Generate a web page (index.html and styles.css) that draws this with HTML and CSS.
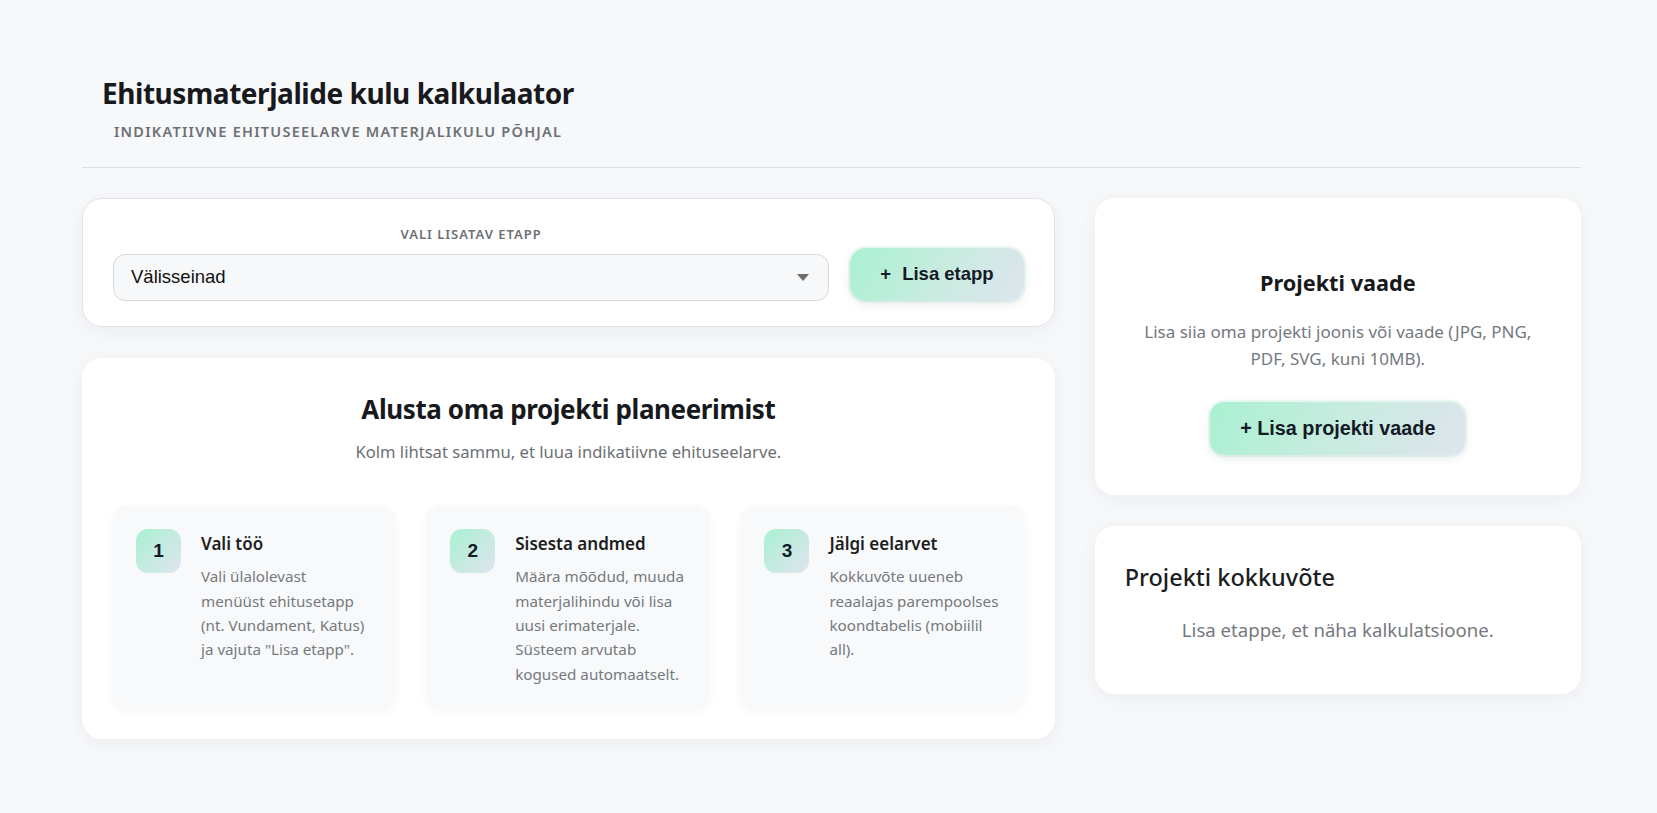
FILE: index.html
```html
<!DOCTYPE html>
<html lang="et">
<head>
<meta charset="utf-8">
<title>Ehitusmaterjalide kulu kalkulaator</title>
<link rel="stylesheet" href="styles.css">
</head>
<body>
<div class="app">
  <header class="header">
    <h1 class="title">Ehitusmaterjalide kulu kalkulaator</h1>
    <p class="subtitle">Indikatiivne ehituseelarve materjalikulu põhjal</p>
  </header>

  <main class="layout">
    <section class="left-col">
      <div class="card picker">
        <div class="field">
          <span class="field-label">Vali lisatav etapp</span>
          <div class="select">
            <span>Välisseinad</span>
            <span class="select-arrow"></span>
          </div>
        </div>
        <button class="btn btn-add"><span class="plus">+</span>Lisa etapp</button>
      </div>

      <div class="card intro">
        <h2 class="intro-title">Alusta oma projekti planeerimist</h2>
        <p class="intro-sub">Kolm lihtsat sammu, et luua indikatiivne ehituseelarve.</p>
        <div class="steps">
          <div class="step">
            <div class="badge">1</div>
            <div class="step-body">
              <h3 class="step-title">Vali töö</h3>
              <p class="step-text">Vali ülalolevast menüüst ehitusetapp (nt. Vundament, Katus) ja vajuta "Lisa etapp".</p>
            </div>
          </div>
          <div class="step">
            <div class="badge">2</div>
            <div class="step-body">
              <h3 class="step-title">Sisesta andmed</h3>
              <p class="step-text">Määra mõõdud, muuda materjalihindu või lisa uusi erimaterjale. Süsteem arvutab kogused automaatselt.</p>
            </div>
          </div>
          <div class="step">
            <div class="badge">3</div>
            <div class="step-body">
              <h3 class="step-title">Jälgi eelarvet</h3>
              <p class="step-text">Kokkuvõte uueneb reaalajas parempoolses koondtabelis (mobiilil all).</p>
            </div>
          </div>
        </div>
      </div>
    </section>

    <aside class="right-col">
      <div class="card upload">
        <h3 class="upload-title">Projekti vaade</h3>
        <p class="upload-text">Lisa siia oma projekti joonis või vaade (JPG, PNG, PDF, SVG, kuni 10MB).</p>
        <button class="btn btn-upload">+ Lisa projekti vaade</button>
      </div>

      <div class="card summary">
        <h3 class="summary-title">Projekti kokkuvõte</h3>
        <p class="summary-empty">Lisa etappe, et näha kalkulatsioone.</p>
      </div>
    </aside>
  </main>
</div>
</body>
</html>
```

FILE: styles.css
```css
* {
  box-sizing: border-box;
}

body {
  margin: 0;
  background: #f7f8fa;
  font-family: "Noto Sans", "Open Sans", sans-serif;
  color: #1c1e21;
}

.app {
  padding: 75px 76px 40px 82px;
}

/* Header */
.header {
  padding: 0 20px 25px;
  border-bottom: 1px solid #dcdfe3;
  margin-bottom: 30px;
}

.title {
  margin: 0;
  font-size: 28px;
  font-weight: 700;
  letter-spacing: -0.45px;
  line-height: 1.3;
  color: #17191c;
}

.subtitle {
  margin: 10px 0 0 12px;
  font-size: 14.5px;
  font-weight: 600;
  letter-spacing: 1.25px;
  text-transform: uppercase;
  color: #6c7075;
  line-height: 1.4;
}

/* Layout */
.layout {
  display: grid;
  grid-template-columns: 2fr 1fr;
  gap: 40px;
  align-items: start;
}

.left-col,
.right-col {
  display: flex;
  flex-direction: column;
  gap: 31px;
}

.card {
  background: #ffffff;
  border-radius: 20px;
  box-shadow: 0 4px 20px rgba(20, 30, 50, 0.05);
}

/* Stage picker */
.picker {
  border: 1px solid #e2e4e8;
  padding: 25px 30px;
  display: flex;
  align-items: flex-end;
  gap: 21px;
}

.field {
  flex: 1;
  display: flex;
  flex-direction: column;
  align-items: center;
}

.field-label {
  font-size: 13px;
  font-weight: 600;
  letter-spacing: 1px;
  text-transform: uppercase;
  color: #6c7075;
  line-height: 20px;
  margin-bottom: 10px;
}

.select {
  width: 100%;
  height: 47px;
  border: 1px solid #d6d9dd;
  border-radius: 12px;
  background: #f7f8fa;
  display: flex;
  align-items: center;
  justify-content: space-between;
  padding: 0 19px 0 17px;
  font-family: "Liberation Sans", Arial, sans-serif;
  font-size: 18.5px;
  color: #111111;
}

.select-arrow {
  width: 0;
  height: 0;
  border-left: 6px solid transparent;
  border-right: 6px solid transparent;
  border-top: 7px solid #6b6b6b;
}

.btn {
  border: none;
  height: 53px;
  padding: 0 30px;
  border-radius: 16px;
  background: linear-gradient(120deg, #a9f1d2 0%, #c7ecdf 50%, #dfe4ee 100%);
  font-family: "Liberation Sans", Arial, sans-serif;
  font-weight: 700;
  color: #141a26;
  box-shadow: 0 3px 10px rgba(40, 60, 80, 0.1), 0 0 0 2px rgba(220, 245, 235, 0.5);
  cursor: pointer;
  white-space: nowrap;
}

.btn-add {
  font-size: 18.5px;
}

.plus {
  margin-right: 11px;
}

/* Intro */
.intro {
  padding: 35px 30px 29px;
  text-align: center;
}

.intro-title {
  margin: 0;
  font-size: 26px;
  font-weight: 700;
  letter-spacing: -0.4px;
  line-height: 1.3;
  color: #17191c;
}

.intro-sub {
  margin: 14px 0 40px;
  font-size: 16.6px;
  line-height: 1.5;
  color: #6c7075;
}

.steps {
  display: grid;
  grid-template-columns: repeat(3, 1fr);
  gap: 30px;
  text-align: left;
}

.step {
  background: #f8f9fa;
  border-radius: 16px;
  padding: 24px;
  display: flex;
  gap: 20px;
  box-shadow: 0 3px 10px rgba(20, 30, 50, 0.035);
}

.badge {
  flex: 0 0 45px;
  height: 44px;
  border-radius: 12px;
  background: linear-gradient(135deg, #a9f1d2 0%, #dfe4ee 100%);
  display: flex;
  align-items: center;
  justify-content: center;
  font-family: "Liberation Sans", Arial, sans-serif;
  font-weight: 700;
  font-size: 19px;
  color: #141a26;
}

.step-body {
  flex: 1;
  min-width: 0;
  padding-top: 3px;
}

.step-title {
  margin: 0 0 8px;
  font-size: 17px;
  font-weight: 600;
  line-height: 1.4;
  color: #1c1e21;
}

.step-text {
  margin: 0;
  font-size: 15.2px;
  line-height: 24.4px;
  color: #75797e;
}

/* Upload */
.upload {
  padding: 70px 30px 40px;
  text-align: center;
}

.upload-title {
  margin: 0;
  font-size: 21.7px;
  font-weight: 700;
  line-height: 1.35;
  color: #17191c;
}

.upload-text {
  max-width: 410px;
  margin: 22px auto 30px;
  font-size: 17px;
  line-height: 26.6px;
  color: #75797e;
}

.btn-upload {
  font-size: 19.8px;
  border-radius: 14px;
}

/* Summary */
.summary {
  padding: 36px 30px 50px;
}

.summary-title {
  margin: 0;
  font-size: 23.5px;
  font-weight: 500;
  line-height: 1.3;
  color: #1c1e21;
}

.summary-empty {
  margin: 23px 0 0;
  text-align: center;
  font-size: 18.6px;
  line-height: 1.5;
  color: #75797e;
}
```
